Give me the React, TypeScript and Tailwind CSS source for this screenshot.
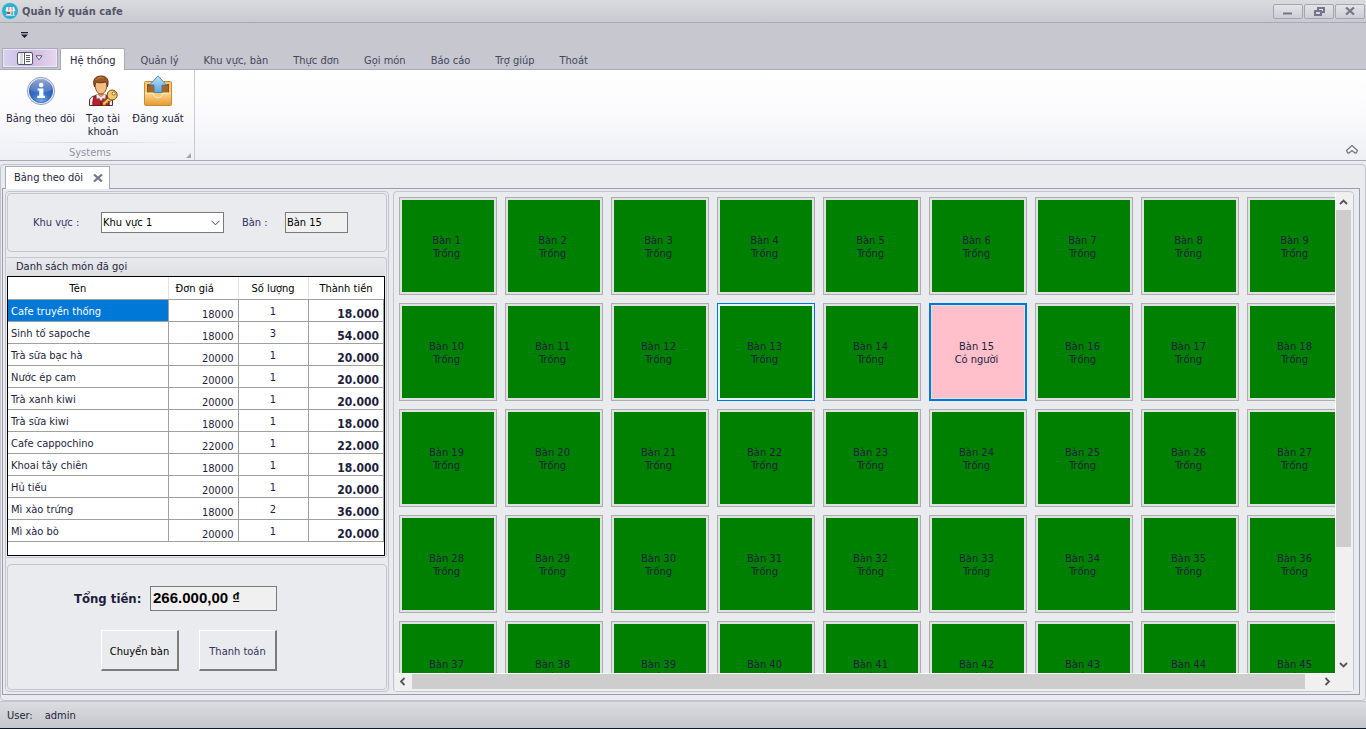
import React from "react";

const ribbonTabs = ["Hệ thống", "Quản lý", "Khu vực, bàn", "Thực đơn", "Gọi món", "Báo cáo", "Trợ giúp", "Thoát"];

const orders = [
  { name: "Cafe truyền thống", price: 18000, qty: 1, total: "18.000" },
  { name: "Sinh tố sapoche", price: 18000, qty: 3, total: "54.000" },
  { name: "Trà sữa bạc hà", price: 20000, qty: 1, total: "20.000" },
  { name: "Nước ép cam", price: 20000, qty: 1, total: "20.000" },
  { name: "Trà xanh kiwi", price: 20000, qty: 1, total: "20.000" },
  { name: "Trà sữa kiwi", price: 18000, qty: 1, total: "18.000" },
  { name: "Cafe cappochino", price: 22000, qty: 1, total: "22.000" },
  { name: "Khoai tây chiên", price: 18000, qty: 1, total: "18.000" },
  { name: "Hủ tiếu", price: 20000, qty: 1, total: "20.000" },
  { name: "Mì xào trứng", price: 18000, qty: 2, total: "36.000" },
  { name: "Mì xào bò", price: 20000, qty: 1, total: "20.000" },
];

const HOVERED_TABLE = 13;
const SELECTED_TABLE = 15;

function AppLogo() {
  return (
    <svg width="16" height="16" viewBox="0 0 16 16" aria-hidden="true">
      <circle cx="8" cy="8" r="8" fill="#27b3d0" />
      <path d="M4.500 4h7.500l1.300 4H3.400z" fill="#f4f4f6" />
      <path d="M6.300 4h1.200v3.500H6zM9.300 4h1.200l.5 3.500H9.500z" fill="#e58b88" />
      <path d="M4.400 8h7.800v4H4.400z" fill="#dfe9ee" />
      <path d="M4.600 8.800h3.600v2.200H4.600z" fill="#8c5a63" />
      <path d="M9.300 8.400h1.800V12H9.300z" fill="#6fa8c4" />
      <path d="M3.800 12h9v.8h-9z" fill="#cfe0e8" />
    </svg>
  );
}

function InfoIcon() {
  return (
    <svg width="32" height="32" viewBox="0 0 32 32" aria-hidden="true">
      <defs>
        <radialGradient id="infoFill" cx="50%" cy="95%" r="90%">
          <stop offset="0" stopColor="#76aeea" />
          <stop offset="0.45" stopColor="#356fc6" />
          <stop offset="1" stopColor="#2a4fa6" />
        </radialGradient>
        <linearGradient id="infoGloss" x1="0" y1="0" x2="0" y2="1">
          <stop offset="0" stopColor="#fff" stopOpacity="0.5" />
          <stop offset="1" stopColor="#fff" stopOpacity="0.1" />
        </linearGradient>
      </defs>
      <circle cx="16" cy="16" r="13.6" fill="#e4eaf6" stroke="#8fa3cf" />
      <circle cx="16" cy="16" r="11.6" fill="url(#infoFill)" stroke="#3558a5" strokeWidth="0.8" />
      <path d="M5 15a11 11 0 0 1 22 0c-6 3-15 4-22 0z" fill="url(#infoGloss)" />
      <circle cx="16.2" cy="10" r="2.3" fill="#fff" />
      <path d="M12.600 13.400h5.800v7.300h1.600v2.200h-7.700v-2.200h1.900v-5.100h-1.600z" fill="#fff" />
    </svg>
  );
}

function UserKeyIcon() {
  return (
    <svg width="32" height="32" viewBox="0 0 32 32" aria-hidden="true">
      <path d="M2.500 30.500v-4.500c0-3 2.500-4.700 6.500-5.500h10c4 .8 6.500 2.500 6.500 5.500v4.500z" fill="#f1efef" stroke="#5a2a2a" />
      <path d="M5.800 30.500v-3.500l1-5.500 3-1 4.200 4.500 4.200-4.500 3 1 1 5.500v3.500z" fill="#b71f2d" stroke="#6a1219" strokeWidth="0.8" />
      <path d="M14 25.500v5" stroke="#6a1219" />
      <path d="M9 19.500l1 4.500 2-1 2 3 2-3 2 1 1-4.500z" fill="#eceef2" stroke="#8f8f9a" strokeWidth="0.7" />
      <path d="M11 16h6v4l-3 2.500-3-2.500z" fill="#d9935a" />
      <path d="M8 9.500c0-4 2.500-6 6-6s6 2 6 6c0 5-2.500 9.500-6 9.500s-6-4.500-6-9.500z" fill="#f2bd86" stroke="#7c4316" strokeWidth="0.9" />
      <path d="M7.500 12C5 4.500 8.500 1 14 1c6 0 8.700 4 6.300 11-.2-2.800-1-4.300-2.200-5.100-3 1.400-7 .8-8.600.4C8.200 8.300 7.900 10 7.500 12z" fill="#9a5720" stroke="#5c2f0c" strokeWidth="0.9" />
      <path d="M9.500 4.700c2-2.500 5-2.500 7-1.500" fill="none" stroke="#cf8a46" />
      <path d="M22.500 21.500l-7 6.300v2.500h3.500v-1.700h2v-1.900h2l2.500-2.500" fill="#f1bf5c" stroke="#7b4b10" />
      <circle cx="25.200" cy="20" r="5" fill="#f3c96e" stroke="#7b4b10" />
      <circle cx="26.700" cy="18.500" r="1.600" fill="#fff6dd" stroke="#7b4b10" strokeWidth="0.8" />
    </svg>
  );
}

function LogoutIcon() {
  return (
    <svg width="32" height="32" viewBox="0 0 32 32" aria-hidden="true">
      <defs>
        <linearGradient id="trayFill" x1="0" y1="0" x2="0" y2="1">
          <stop offset="0" stopColor="#fbd98d" />
          <stop offset="1" stopColor="#e79a35" />
        </linearGradient>
        <linearGradient id="arrowFill" x1="0" y1="0" x2="0" y2="1">
          <stop offset="0" stopColor="#bfe4fa" />
          <stop offset="1" stopColor="#5ba6e0" />
        </linearGradient>
      </defs>
      <rect x="2.500" y="6.500" width="27" height="24" rx="1" fill="#f7c877" stroke="#c98a35" />
      <path d="M5 9h22v9H5z" fill="#8f5216" />
      <path d="M6 11h20v7H6z" fill="#a8651f" />
      <path d="M3 18h8.500c.5 3.500 2.200 4.800 4.500 4.800s4-1.300 4.500-4.800H29v12H3z" fill="url(#trayFill)" />
      <path d="M3 18h8.500c.5 3.500 2.200 4.800 4.500 4.800s4-1.300 4.500-4.800H29" fill="none" stroke="#fff0c8" />
      <path d="M16 .8l8.500 9.200h-4.600v7.500h-7.800V10H7.500z" fill="url(#arrowFill)" stroke="#4a86ba" strokeWidth="0.9" />
    </svg>
  );
}

function CloseGlyph() {
  return (
    <svg width="10" height="8" viewBox="0 0 10 8" aria-hidden="true">
      <path d="M1 .5l8 7M9 .5l-8 7" stroke="#75768a" strokeWidth="2.2" />
    </svg>
  );
}

function WindowButton({ label, children }: { label: string; children: React.ReactNode }) {
  return (
    <button
      aria-label={label}
      className="flex h-[15px] w-[30px] items-center justify-center rounded-xs border border-[#a5a6b3] bg-linear-to-b from-[#e3e4e8] to-[#cdced4]"
    >
      {children}
    </button>
  );
}

function TitleBar() {
  return (
    <header className="flex h-[23px] shrink-0 items-center border-b border-[#a9aab7] bg-linear-to-b from-[#dadbde] to-[#c9cad0] pl-[2px]">
      <AppLogo />
      <h1 className="ml-1 flex-1 pt-[2px] font-bold text-[#55566b]">Quản lý quán cafe</h1>
      <div className="flex gap-px pr-px">
        <WindowButton label="Thu nhỏ">
          <svg width="10" height="8" viewBox="0 0 10 8"><path d="M0 5.500h9v2H0z" fill="#75768a" /></svg>
        </WindowButton>
        <WindowButton label="Khôi phục">
          <svg width="11" height="9" viewBox="0 0 11 9" fill="none" stroke="#75768a" strokeWidth="2">
            <path d="M4 3V1h6v4H8M1 4h6v4H1z" />
          </svg>
        </WindowButton>
        <WindowButton label="Đóng">
          <CloseGlyph />
        </WindowButton>
      </div>
    </header>
  );
}

function RibbonButton({ icon, label, width }: { icon: React.ReactNode; label: string; width: string }) {
  return (
    <button className={`flex flex-col items-center text-center leading-[13px] ${width}`}>
      {icon}
      <span className="mt-[5px]">{label}</span>
    </button>
  );
}

function Ribbon() {
  return (
    <>
      <div className="flex h-[25px] shrink-0 items-center bg-[#c6c7cf] pl-5">
        <button aria-label="Tùy chỉnh thanh công cụ">
          <svg width="9" height="7" viewBox="0 0 9 7"><path d="M1 0h7v1.200H1zM1 2.500h7L4.500 6z" fill="#1c1d35" /></svg>
        </button>
      </div>
      <nav className="flex h-[22px] shrink-0 items-stretch border-b border-[#a9aab7] bg-[#c6c7cf] pl-[2px]">
        <button
          aria-label="Trình đơn"
          className="mb-px flex w-14 items-center justify-center gap-[2px] border border-[#a9aab7] bg-linear-to-r from-[#d6d2f0] via-[#cdb9e0] to-[#e6d6ef] shadow-[inset_0_0_0_1px_#eee6f6]"
        >
          <svg width="16" height="13" viewBox="0 0 16 13">
            <rect x="0.5" y="0.5" width="15" height="12" rx="1.5" fill="#fff" stroke="#55566b" />
            <path d="M3 1h3v11H3z" fill="#d9dae2" />
            <path d="M7.500 1v11" stroke="#55566b" />
            <path d="M9 3.500h4M9 5.500h4M9 7.500h4M9 9.500h4" stroke="#55566b" />
          </svg>
          <svg width="8" height="6" viewBox="0 0 8 6"><path d="M1 .8h6L4 4.800z" fill="#fff" stroke="#55566b" /></svg>
        </button>
        <div className="ml-[2px] flex gap-[5px]">
          {ribbonTabs.map((tab, i) => (
            <button
              key={tab}
              className={
                i === 0
                  ? "-mb-px rounded-t-xs border border-b-0 border-[#a9aab7] bg-white px-[9px] pt-[2px] text-[#1e1e3c]"
                  : "px-[10px] pt-[5px] text-[#45465e]"
              }
            >
              {tab}
            </button>
          ))}
        </div>
      </nav>
      <section className="flex h-[91px] shrink-0 justify-between border-b border-[#a9aab7] bg-linear-to-b from-white via-[#fafafc] to-[#eff0f5]">
        <div className="flex w-[195px] flex-col border-r border-[#c9cad3] pt-[5px]">
          <div className="flex flex-1 items-start pl-[2px]">
            <RibbonButton icon={<InfoIcon />} label="Bảng theo dõi" width="w-[77px]" />
            <RibbonButton icon={<UserKeyIcon />} label="Tạo tài khoản" width="w-[48px]" />
            <RibbonButton icon={<LogoutIcon />} label="Đăng xuất" width="w-[62px]" />
          </div>
          <div className="mx-2 h-px bg-linear-to-r from-transparent via-[#cfd0d8] to-transparent" />
          <div className="relative h-[17px] pr-[14px] text-center leading-[19px] text-[#92939f]">
            Systems
            <svg className="absolute right-[3px] bottom-[2px]" width="5" height="5" viewBox="0 0 5 5"><path d="M5 0v5H0z" fill="#a4a5b0" /></svg>
          </div>
        </div>
        <button aria-label="Thu gọn thanh công cụ" className="mr-[7px] mb-[5px] self-end">
          <svg width="14" height="11" viewBox="0 0 14 11">
            <path d="M1.500 6.500L7 1.500l5.500 5-1.300 2.500H10L7 6.500 4 9H2.800z" fill="#f6f6f9" stroke="#777888" strokeWidth="1.3" strokeLinejoin="round" />
          </svg>
        </button>
      </section>
    </>
  );
}

function OrderTable() {
  return (
    <section className="rounded-r-sm border border-l-0 border-[#c3c4ce] pr-px pb-px">
      <h2 className="h-[18px] bg-linear-to-b from-[#e8e9ed] to-[#dfe0e4] pl-[9px] leading-[17px]">Danh sách món đã gọi</h2>
      <div className="h-[280px] border border-black bg-white">
        <table className="w-full table-fixed border-collapse">
          <colgroup>
            <col className="w-[160px]" />
            <col className="w-[70px]" />
            <col className="w-[70px]" />
            <col />
          </colgroup>
          <thead>
            <tr className="h-[22px] text-black">
              <th className="border-r border-b border-r-[#e2e2e2] border-b-[#a0a0a0] pt-[2px] pr-5 font-normal">Tên</th>
              <th className="border-r border-b border-r-[#e2e2e2] border-b-[#a0a0a0] pt-[2px] pl-[7px] text-left font-normal">Đơn giá</th>
              <th className="border-r border-b border-r-[#e2e2e2] border-b-[#a0a0a0] pt-[2px] font-normal">Số lượng</th>
              <th className="border-b border-[#a0a0a0] pt-[2px] font-normal">Thành tiền</th>
            </tr>
          </thead>
          <tbody className="leading-[13px]">
            {orders.map((order, i) => (
              <tr key={order.name} className="h-[22px]">
                <td
                  className={
                    i === 0
                      ? "border border-l-0 border-[#a0a0a0] bg-[#0078d7] pt-[3px] pl-[3px] text-white"
                      : "border border-l-0 border-[#a0a0a0] pt-[3px] pl-[3px]"
                  }
                >
                  {order.name}
                </td>
                <td className="border border-[#a0a0a0] pt-2 pr-1 text-right">{order.price}</td>
                <td className="border border-[#a0a0a0] pt-[3px] text-center">{order.qty}</td>
                <td className="border border-[#a0a0a0] pt-2 pr-1 text-right text-[12px] leading-[13px] font-bold">{order.total}</td>
              </tr>
            ))}
          </tbody>
        </table>
      </div>
    </section>
  );
}

const classicButton =
  "h-[41px] w-[78px] border-t border-l border-r-2 border-b-2 border-t-white border-l-white border-r-[#7c7c7c] border-b-[#7c7c7c] bg-[#eaebef]";

function OrderPanel() {
  return (
    <aside className="flex w-[384px] shrink-0 flex-col rounded-sm border border-[#c3c4ce] p-px">
      <section className="flex h-[59px] items-center rounded-sm border border-[#c3c4ce] pl-[25px]">
        <label htmlFor="area" className="w-[68px] text-[#31325e]">Khu vực :</label>
        <div className="relative">
          <select id="area" defaultValue="1" className="h-[21px] w-[123px] appearance-none border border-[#7a7a7a] bg-white pl-px text-black">
            <option value="1">Khu vực 1</option>
          </select>
          <svg className="pointer-events-none absolute top-[8px] right-[4px]" width="9" height="6" viewBox="0 0 9 6">
            <path d="M.5.8l4 4 4-4" fill="none" stroke="#444" />
          </svg>
        </div>
        <label htmlFor="table" className="ml-[18px] w-[43px] text-[#31325e]">Bàn :</label>
        <input id="table" readOnly value="Bàn 15" className="h-[21px] w-[63px] border border-[#7a7a7a] bg-[#f0f0f0] pb-px pl-px text-black" />
      </section>
      <div className="mt-[5px]">
        <OrderTable />
      </div>
      <section className="mt-1.5 flex-1 rounded-sm border border-[#c3c4ce] pt-[21px] pl-[66px]">
        <div className="flex items-center">
          <label htmlFor="total" className="w-[76px] text-[13px] font-bold">Tổng tiền:</label>
          <input
            id="total"
            readOnly
            value="266.000,00 ₫"
            className="h-[25px] w-[127px] border border-[#7a7a7a] bg-[#f0f0f0] pb-[2px] pl-[2px] font-['Liberation_Sans',Arial,sans-serif] text-[15px] font-bold text-black"
          />
        </div>
        <div className="mt-[19px] flex gap-5 pl-[27px]">
          <button className={`${classicButton} pt-[3px] text-black`}>Chuyển bàn</button>
          <button className={`${classicButton} pt-[3px] text-[#31325e]`}>Thanh toán</button>
        </div>
      </section>
    </aside>
  );
}

function TableTile({ id }: { id: number }) {
  const selected = id === SELECTED_TABLE;
  const look = selected
    ? "border-2 border-[#0078d7] bg-[#ffc0cb] pr-[3px] shadow-[inset_0_0_0_1px_#e1e1e1]"
    : id === HOVERED_TABLE
      ? "border border-[#0078d7] bg-[#008000] pr-[3px] shadow-[inset_0_0_0_2px_#e5f1fb]"
      : "border border-[#adadad] bg-[#008000] pr-[3px] shadow-[inset_0_0_0_2px_#e1e1e1]";
  return (
    <button className={`flex h-[98px] w-[98px] flex-col items-center justify-center pt-[2px] leading-[13px] text-[#1e1e3c] ${look}`}>
      <span>Bàn {id}</span>
      <span>{selected ? "Có người" : "Trống"}</span>
    </button>
  );
}

function Chevron({ d }: { d: string }) {
  return (
    <svg width="15" height="15" viewBox="0 0 15 15" className="shrink-0" aria-hidden="true">
      <path d={d} fill="none" stroke="#555" strokeWidth="1.8" />
    </svg>
  );
}

function FloorPlan() {
  const ids = Array.from({ length: 45 }, (_, i) => i + 1);
  return (
    <main className="grid min-w-0 flex-1 grid-cols-[minmax(0,1fr)_18px] grid-rows-[minmax(0,1fr)_18px] rounded-sm border border-[#c3c4ce] pt-px pl-px">
      <div className="overflow-hidden pt-1 pl-1">
        <div className="grid w-max grid-cols-9 gap-2">
          {ids.map((id) => (
            <TableTile key={id} id={id} />
          ))}
        </div>
      </div>
      <div className="flex flex-col border-l border-white bg-[#f0f0f0] pt-px">
        <Chevron d="M4 10l3.500-3.500L11 10" />
        <div className="mt-px w-[15px] flex-[337] bg-[#cdcdcd]" />
        <div className="flex-[111]" />
        <Chevron d="M4 5l3.500 3.500L11 5" />
      </div>
      <div className="flex border-t border-white bg-[#f0f0f0]">
        <Chevron d="M9.500 4L6 7.500 9.500 11" />
        <div className="ml-[2px] h-[15px] flex-[893] bg-[#cdcdcd]" />
        <div className="flex-[15]" />
        <Chevron d="M5.500 4L9 7.500 5.500 11" />
      </div>
      <div className="bg-[#f0f0f0]" />
    </main>
  );
}

export default function App() {
  return (
    <div className="flex h-screen min-h-[600px] flex-col overflow-hidden bg-[#eaebef] font-['DejaVu_Sans_Condensed','DejaVu_Sans','Noto_Sans',sans-serif] text-[11px] leading-[14px] text-[#1e1e3c]">
      <TitleBar />
      <Ribbon />
      <div className="mt-[3px] flex min-h-0 flex-1 flex-col rounded-sm border border-[#c3c4ce] px-px pt-px pb-[5px]">
        <div className="flex h-[22px] pl-[3px]">
          <div className="relative z-10 -mb-px flex w-[105px] items-center border border-b-0 border-[#a9aab7] bg-white pl-2">
            <span className="w-[79px]">Bảng theo dõi</span>
            <button aria-label="Đóng thẻ">
              <CloseGlyph />
            </button>
          </div>
        </div>
        <div className="mr-1 flex min-h-0 flex-1 gap-1 border border-[#9c9dab] pt-[2px] pr-[5px] pb-[2px] pl-[2px]">
          <OrderPanel />
          <FloorPlan />
        </div>
      </div>
      <footer className="flex h-[28px] shrink-0 items-center gap-3 border-t border-b border-t-[#c3c4ce] border-b-[#0b1a24] bg-linear-to-b from-[#dbdce0] to-[#c6c7cd] pt-px pl-[7px]">
        <span>User:</span>
        <span>admin</span>
      </footer>
    </div>
  );
}
